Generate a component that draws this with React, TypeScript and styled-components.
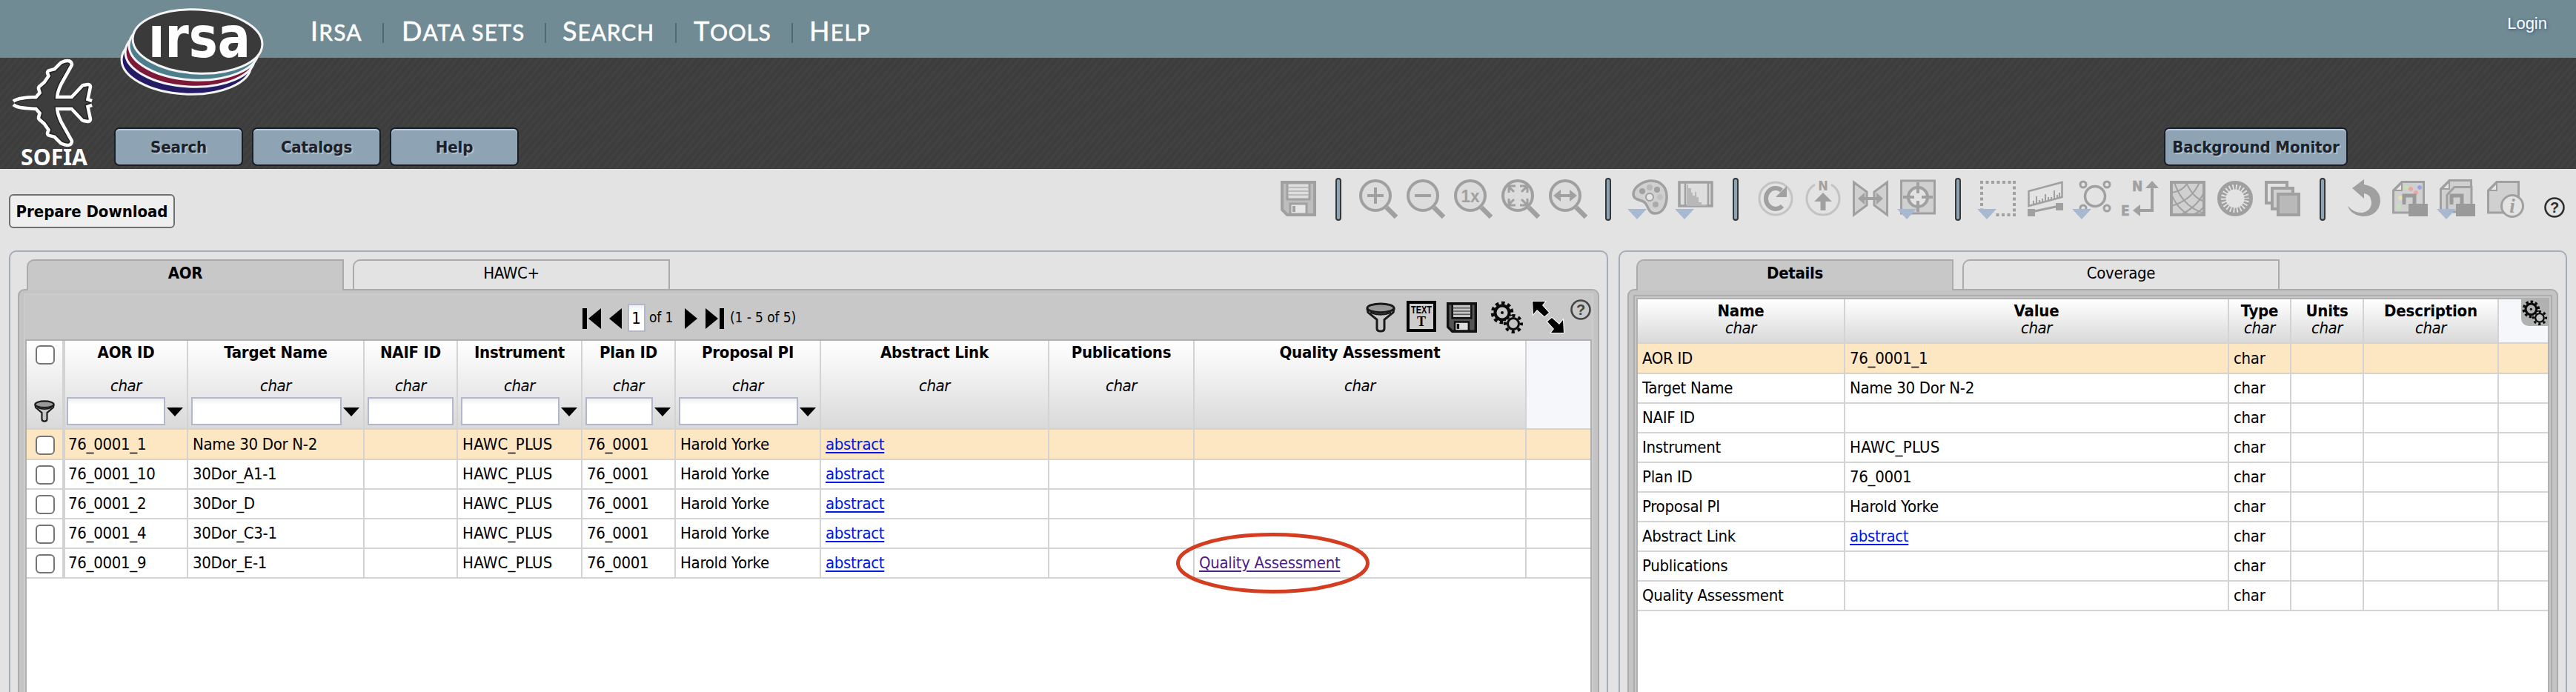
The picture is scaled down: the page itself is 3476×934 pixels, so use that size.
import React from "react";
import styled, { createGlobalStyle, css } from "styled-components";

const uiFont = `"DejaVu Sans Condensed", "DejaVu Sans", sans-serif`;

const GlobalStyle = createGlobalStyle`
  * { box-sizing: border-box; }
  body { margin: 0; background: #e3e3e3; font-family: ${uiFont}; font-stretch: condensed; font-size: 22px; color: #000; }
  button, input { font: inherit; }
  svg { display: block; flex: none; overflow: visible; }
`;

const Page = styled.div`
  position: relative;
  display: flex;
  flex-direction: column;
  width: 3476px;
  height: 934px;
  overflow: hidden;
  background: #e3e3e3;
`;

const SiteBar = styled.header`
  display: flex;
  align-items: flex-start;
  justify-content: space-between;
  flex: none;
  height: 78px;
  padding: 0 39px 0 419px;
  background: #718b94;
`;

const SiteNav = styled.nav`
  display: flex;
`;

const NavItem = styled.a<{ $width: number; $gap: number }>`
  display: flex;
  align-items: baseline;
  width: ${(p) => p.$width}px;
  margin-right: ${(p) => p.$gap}px;
  margin-top: 18px;
  height: 44px;
  line-height: 46px;
  white-space: nowrap;
  font-family: Lato, sans-serif;
  font-stretch: normal;
  font-size: 30px;
  color: #fff;
  text-transform: uppercase;
  -webkit-text-stroke: 0.5px #fff;
`;

const NavLabel = styled.span<{ $spacing: number }>`
  display: block;
  letter-spacing: ${(p) => p.$spacing}px;
  &::first-letter { font-size: 36px; }
`;

const NavDivider = styled.span<{ $after: number }>`
  width: 2px;
  height: 27px;
  margin: 31px ${(p) => p.$after}px 0 -2px;
  background: #4c6974;
`;

const Login = styled.a`
  margin-top: 19px;
  font-family: "Liberation Sans", sans-serif;
  font-stretch: normal;
  font-size: 22px;
  line-height: 26px;
  color: #fff;
  text-shadow: 1px 1px 4px #2d4f80;
`;

const AppBar = styled.div`
  display: flex;
  align-items: flex-end;
  flex: none;
  height: 150px;
  padding: 0 308px 4px 154px;
  gap: 12px;
  background: repeating-linear-gradient(130deg, #3d3d3d 0 3px, #424242 4px 5px, #3d3d3d 7px);
`;

const AppButton = styled.button<{ $width: number }>`
  width: ${(p) => p.$width}px;
  height: 52px;
  padding: 0;
  border: 2px solid #191d25;
  border-radius: 7px;
  background: #8ea4b5;
  box-shadow: inset 0 2px 0 #bccbdb;
  font-size: 22px;
  font-weight: bold;
  letter-spacing: -0.1px;
  color: #1b222b;
  text-shadow: 2px 2px 1px #b4c0cb;
`;

const BarSpacer = styled.div`
  flex: 1;
`;

const Brand = styled.div`
  position: absolute;
  left: 0;
  top: 0;
`;

const ActionRow = styled.div`
  display: flex;
  justify-content: space-between;
  flex: none;
  height: 110px;
  padding: 0 14px 0 12px;
`;

const PrepareButton = styled.button`
  width: 224px;
  height: 46px;
  margin-top: 34px;
  padding: 0;
  border: 2px solid #707070;
  border-radius: 6px;
  background: #efefef;
  font-weight: bold;
  white-space: nowrap;
  letter-spacing: -0.05px;
`;

const ImageTools = styled.div`
  display: flex;
  padding-top: 12px;
`;

const ToolDivider = styled.span`
  width: 8px;
  height: 58px;
  margin: 0 22px 0 14px;
  border: 2px solid #33383c;
  border-radius: 4px;
  background: #8ea4b5;
`;

const HelpSlot = styled.span`
  margin: 25px 0 0 16px;
`;

const Workspace = styled.main`
  display: flex;
  flex: 1;
  gap: 14px;
  padding: 0 12px;
  height: 596px;
`;

const Group = styled.section<{ $width: number }>`
  display: flex;
  flex-direction: column;
  width: ${(p) => p.$width}px;
  height: 620px;
  padding: 10px 10px 0;
  border: 2px solid #a5acb9;
  border-radius: 10px;
`;

const TabStrip = styled.div`
  display: flex;
  flex: none;
  gap: 12px;
  height: 40px;
  padding-left: 12px;
`;

const Tab = styled.div<{ $active?: boolean }>`
  position: relative;
  width: 428px;
  height: 40px;
  border: 2px solid #ababab;
  border-bottom: 0;
  border-radius: 10px 0 0 0;
  text-align: center;
  line-height: 33px;
  letter-spacing: -0.3px;
  ${(p) =>
    p.$active &&
    css`
      z-index: 1;
      height: 42px;
      background: #c8c8c8;
      font-weight: bold;
    `}
`;

const TabBody = styled.div`
  display: flex;
  flex: 1;
  flex-direction: column;
  padding: 4px 6px 0;
  border: 2px solid #ababab;
  border-radius: 9px 9px 0 0;
  background: #c4c4c4;
`;

const TableShell = styled.div<{ $lined?: boolean }>`
  display: flex;
  flex: 1;
  flex-direction: column;
  border: 2px solid ${(p) => (p.$lined ? "#adadad" : "#cccccc")};
  padding: ${(p) => (p.$lined ? "2px" : "0")};
  margin-top: ${(p) => (p.$lined ? "2px" : "0")};
  background: #c8c8c8;
`;

const TableBar = styled.div`
  display: flex;
  flex: none;
  justify-content: space-between;
  height: 60px;
  padding-left: 752px;
`;

const Pager = styled.div`
  display: flex;
  padding-top: 10px;
`;

const PageInput = styled.span`
  width: 24px;
  height: 38px;
  margin: 2px 5px 0 8px;
  border: 2px solid #b3b7cb;
  background: linear-gradient(#edf0f0, #fff 8px);
  text-align: center;
  line-height: 36px;
  text-indent: -1px;
`;

const PagerText = styled.span<{ $width: number }>`
  width: ${(p) => p.$width}px;
  margin-top: 3px;
  line-height: 34px;
  white-space: nowrap;
  font-size: 19px;
  letter-spacing: -0.1px;
`;

const Pointer = styled.span<{ $gap: number }>`
  margin: 8px ${(p) => p.$gap}px 0 0;
`;

const TableTools = styled.div`
  display: flex;
`;

const ToolSlot = styled.span<{ $gap: number; $top: number }>`
  margin: ${(p) => p.$top}px ${(p) => p.$gap}px 0 0;
`;

const TableFrame = styled.div`
  position: relative;
  flex: 1;
  border: 2px solid #b0b0b0;
  background: #fff;
`;

const HeaderRow = styled.div<{ $cols: string; $height: number }>`
  display: grid;
  grid-template-columns: ${(p) => p.$cols};
  height: ${(p) => p.$height}px;
`;

const HeaderCell = styled.div<{ $blank?: boolean; $edge?: number }>`
  display: flex;
  flex-direction: column;
  align-items: center;
  min-width: 0;
  border-right: ${(p) => p.$edge ?? 2}px solid #d3d3d3;
  border-bottom: 2px solid #d3d3d3;
  background: ${(p) => (p.$blank ? "#f5f7fa" : "linear-gradient(#fff, #f0f0f0 40%, #d9d9d9)")};
`;

const ColumnTitle = styled.div`
  flex: none;
  height: 26px;
  line-height: 32px;
  font-weight: bold;
  white-space: nowrap;
  letter-spacing: -0.2px;
`;

const ColumnType = styled.div<{ $spread?: boolean }>`
  margin-top: ${(p) => (p.$spread ? 22 : 0)}px;
  line-height: 25px;
  font-style: italic;
  letter-spacing: -0.4px;
`;

const FilterRow = styled.div<{ $first?: boolean }>`
  display: flex;
  gap: 2px;
  width: 100%;
  height: 38px;
  margin-top: 3px;
  padding: 0 4px 0 ${(p) => (p.$first ? 2 : 4)}px;
`;

const FilterBox = styled.input`
  flex: 1;
  min-width: 0;
  height: 38px;
  padding: 0;
  border: 2px solid #b3b7cb;
  border-radius: 0;
  outline: none;
  background: linear-gradient(#edf0f0, #fff 8px);
`;

const FilterArrow = styled.span`
  width: 23px;
  padding-top: 14px;
`;

const DataRow = styled.div<{ $cols: string; $selected?: boolean }>`
  display: grid;
  grid-template-columns: ${(p) => p.$cols};
  height: 40px;
  background: ${(p) => (p.$selected ? "#fde7c3" : "#fff")};
`;

const Cell = styled.div<{ $inset?: number; $edge?: number }>`
  min-width: 0;
  padding: 1px 0 0 ${(p) => p.$inset ?? 6}px;
  border-right: ${(p) => p.$edge ?? 2}px solid #d3d3d3;
  border-bottom: 2px solid #d3d3d3;
  line-height: 38px;
  white-space: nowrap;
  letter-spacing: -0.3px;
`;

const Wide = styled.span`
  letter-spacing: 0.25px;
`;

const Link = styled.a<{ $visited?: boolean }>`
  color: ${(p) => (p.$visited ? "#4b2187" : "#0018e8")};
  text-decoration: underline;
  text-decoration-thickness: 2px;
  text-underline-offset: 3px;
`;

const Checkbox = styled.span`
  display: block;
  width: 26px;
  height: 26px;
  border: 2px solid #767676;
  border-radius: 6px;
  background: #fff;
`;

const CheckCell = styled.div`
  padding: 8px 0 0 12px;
  border-right: 4px solid #d3d3d3;
  border-bottom: 2px solid #d3d3d3;
`;

const CheckHeader = styled(CheckCell)`
  display: flex;
  flex-direction: column;
  justify-content: space-between;
  padding: 6px 0 8px 10px;
  background: linear-gradient(#fff, #f0f0f0 40%, #d9d9d9);
  ${Checkbox} { margin-left: 2px; }
`;

const OptionsButton = styled.button`
  position: absolute;
  top: 0;
  right: 0;
  width: 36px;
  height: 36px;
  padding: 1px;
  border: 0;
  border-radius: 0 0 0 10px;
  background: #b1b1b1;
`;

const Highlight = styled.svg`
  position: absolute;
  left: 1585px;
  top: 717px;
`;

const G = "#a0a0a0";
const L = "#d0d0d0";

const Icon = ({ children, menu }: { children: React.ReactNode; menu?: boolean }) => (
  <svg width="64" height="58" viewBox="0 0 64 58" fill="none" stroke={G} strokeWidth="4">
    {children}
    {menu && <path d="M0 42H26L13 56Z" fill="#a8b9cf" stroke="none" />}
  </svg>
);

const Lens = ({ children }: { children: React.ReactNode }) => (
  <Icon>
    <circle cx="24" cy="24" r="20" fill="#dcdcdc" />
    <path d="M39 40L52 53" strokeWidth="6.5" />
    {children}
  </Icon>
);

const Disk = ({ dark }: { dark?: boolean }) => {
  const s = dark ? "#111" : G;
  return (
    <g stroke={s} fill="none">
      <path d="M6 6H50V50H13L6 43Z" fill={dark ? "#555" : "#bdbdbd"} strokeWidth="4" />
      <path d="M13 7H43V29H13Z" fill={dark ? "#c4c4c4" : "#dedede"} strokeWidth="3" />
      <path d="M14 13H42M14 18H42M14 23H42" strokeWidth="1.8" stroke={dark ? "#555" : "#bbb"} />
      <path d="M17 35H39V49H17Z" fill={dark ? "#ddd" : "#e6e6e6"} strokeWidth="3" />
      <path d="M22 38V46" strokeWidth="4" />
    </g>
  );
};

const Palette = () => (
  <Icon menu>
    <path d="M30 4C47 3 54 15 53 28C52 40 46 48 38 48C28 48 29 40 24 34C20 29 8 31 8 22C8 13 20 5 30 4Z" fill={L} strokeWidth="3.5" />
    <circle cx="20" cy="18" r="4" fill={G} stroke="none" />
    <circle cx="30" cy="13" r="4" fill="#b8b8b8" stroke="none" />
    <circle cx="40" cy="16" r="4" fill={G} stroke="none" />
    <circle cx="44" cy="26" r="4" fill="#c2c2c2" stroke="none" />
    <circle cx="38" cy="36" r="4" fill="#aaa" stroke="none" />
    <circle cx="30" cy="26" r="5" fill="#e6e6e6" strokeWidth="2" />
  </Icon>
);

const Histogram = () => (
  <Icon menu>
    <path d="M6 6H50V38H6Z" fill="#dedede" strokeWidth="3.5" />
    <path d="M14 6V38M45 6V38" strokeWidth="2.5" />
    <path d="M16 38V9H18V14H22V20H24V24H27V19H29V26H32V33H36V36H42V38Z" fill="#b8b8b8" stroke="none" />
  </Icon>
);

const RotateIcon = () => (
  <Icon>
    <circle cx="28" cy="28" r="22" stroke="#c3c3c3" strokeWidth="3" />
    <path d="M37 38A13 14 0 1 1 36 17" strokeWidth="6" />
    <path d="M43 11V26H28Z" fill={G} stroke="none" />
  </Icon>
);

const NorthIcon = () => (
  <Icon>
    <path d="M17 9A22 22 0 1 0 39 9" stroke="#c3c3c3" strokeWidth="3" />
    <text x="28" y="17" textAnchor="middle" fontFamily="DejaVu Sans" fontWeight="bold" fontSize="18" fill={G} stroke="none">N</text>
    <path d="M28 20L40 32H31.500V44H24.500V32H16Z" fill={G} stroke="none" />
  </Icon>
);

const FlipIcon = () => (
  <Icon>
    <path d="M5.500 6L23 19V37L5.500 50ZM50.500 6L33 19V37L50.500 50Z" fill={L} strokeWidth="3" />
    <path d="M17 28H39" />
    <path d="M11 28L20 20V36ZM45 28L36 20V36Z" fill={G} stroke="none" />
  </Icon>
);

const RecenterIcon = () => (
  <Icon menu>
    <path d="M5.500 4H50.500V48H5.500Z" fill={L} strokeWidth="3" />
    <circle cx="28" cy="26" r="13" fill="#e3e3e3" />
    <path d="M28 6V21M28 31V46M8 26H23M33 26H48" />
  </Icon>
);

const SelectIcon = () => (
  <Icon menu>
    <path d="M4 6H52M50 4V52M52 50H22M6 4V42" strokeDasharray="4 3.500" />
  </Icon>
);

const RulerIcon = () => (
  <Icon>
    <path d="M5.500 18L50.500 6V26L5.500 38Z" strokeWidth="2.500" />
    <path d="M12 36V31M16 35V25M20 34V30M24 33V28M28 32V22M32 31V26M36 30V26M40 28V17M44 27V23M47 26V20" strokeWidth="2" />
    <path d="M9 46L47 38" strokeWidth="3" />
    <path d="M4 42H14V52H4ZM42 34H52V44H42Z" fill={G} stroke="none" />
  </Icon>
);

const MarkerIcon = () => (
  <Icon menu>
    <circle cx="31" cy="25" r="13.500" strokeWidth="3.500" />
    {[[15, 9], [47, 9], [47, 41], [15, 41]].map(([x, y]) => (
      <circle key={`${x}-${y}`} cx={x} cy={y} r="4" strokeWidth="3" />
    ))}
  </Icon>
);

const CompassIcon = () => (
  <Icon>
    <path d="M44 12V44H26" />
    <path d="M44 4L53 14H35ZM18 44L28 36V52Z" fill={G} stroke="none" />
    <g fontFamily="DejaVu Sans" fontWeight="bold" fontSize="19" fill={G} stroke={G} strokeWidth="0.500">
      <text x="17" y="18">N</text>
      <text x="2" y="51">E</text>
    </g>
  </Icon>
);

const GridIcon = () => (
  <Icon>
    <path d="M6 6H50V50H6Z" fill={L} />
    <path d="M6 20Q22 18 28 6M6 38Q34 30 44 6M18 50Q40 40 50 20M34 50Q46 46 50 38M10 6Q20 38 50 48M26 6Q34 26 50 32M6 22Q14 42 30 50" strokeWidth="2" />
  </Icon>
);

const SunRingIcon = () => (
  <Icon>
    <circle cx="28" cy="28" r="21.500" strokeWidth="5" />
    <circle cx="28" cy="28" r="16.500" strokeWidth="8" strokeDasharray="2.800 1.912" />
  </Icon>
);

const LayersIcon = () => (
  <Icon>
    <path d="M6 6H34V34H6Z" fill="#e3e3e3" />
    <path d="M14 14H42V42H14Z" fill={L} />
    <path d="M22 22H50V50H22Z" fill="#b9b9b9" />
  </Icon>
);

const UndoIcon = () => (
  <Icon>
    <path d="M14 14L30 2V9Q52 13 52 32Q49 52 28 52Q12 50 8 38Q17 48 28 47Q40 44 40 33Q39 22 30 21V28Z" fill={G} stroke="none" />
  </Icon>
);

const Doc = ({ x = 4, y = 4 }: { x?: number; y?: number }) => (
  <g transform={`translate(${x} ${y})`}>
    <path d="M1.500 43V13L13 1.500H42.500V43Z" fill={L} strokeWidth="3" />
    <path d="M3 13L13 3V13Z" fill="#e8e8e8" strokeWidth="2" />
  </g>
);

const Padlock = () => (
  <g>
    <path d="M20 36V24H34V36" stroke="#9a9a9a" strokeWidth="5" />
    <path d="M26 35H52V52H26Z" fill="#9a9a9a" stroke="none" />
  </g>
);

const sparks: [string, number, number][] = [
  ["#bfe5b3", 23, 13],
  ["#eea5a0", 29, 15],
  ["#a0a0ea", 41, 13],
  ["#eea5a0", 36, 20],
  ["#e8e4b0", 15, 27],
  ["#bfe5b3", 13, 39],
];

const LockDocIcon = () => (
  <Icon>
    <Doc />
    {sparks.map(([c, x, y]) => (
      <path key={`${x}-${y}`} d={`M${x - 3} ${y}H${x + 3}M${x} ${y - 3}V${y + 3}`} stroke={c} strokeWidth="3" />
    ))}
    <Padlock />
  </Icon>
);

const LockStackIcon = () => (
  <Icon menu>
    <Doc y={2} />
    <path d="M14 46V23L24 12.500H47V46Z" fill={L} strokeWidth="3" />
    <Padlock />
  </Icon>
);

const InfoDocIcon = () => (
  <Icon>
    <Doc />
    <circle cx="38" cy="38" r="14.500" fill="#e3e3e3" strokeWidth="3" />
    <text x="38" y="47" textAnchor="middle" fontFamily="Liberation Serif" fontStyle="italic" fontWeight="bold" fontSize="27" fill={G} stroke="none">i</text>
  </Icon>
);

const HelpIcon = ({ color }: { color: string }) => (
  <svg width="30" height="30" viewBox="0 0 30 30">
    <circle cx="15" cy="15" r="12.500" fill="none" stroke={color} strokeWidth="2.600" />
    <text x="15" y="22" textAnchor="middle" fontFamily="Liberation Sans" fontWeight="bold" fontSize="20" fill={color}>?</text>
  </svg>
);

const Funnel = ({ width, height }: { width: number; height: number }) => (
  <svg width={width} height={height} viewBox="0 0 40 42" preserveAspectRatio="none" stroke="#1a1a1a" strokeWidth="3" strokeLinejoin="round">
    <path d="M2 9L3 14L15 24V36Q15 40 20 40Q25 40 25 36V24L37 14L38 9Z" fill="#c8c8c8" />
    <ellipse cx="20" cy="8" rx="18" ry="6" fill="#999" />
    <path d="M6 14Q20 20 34 14" fill="none" strokeWidth="2.500" />
  </svg>
);

const TextViewIcon = () => (
  <svg width="40" height="42" viewBox="0 0 40 42">
    <path d="M2 2H38V40H2Z" fill="#cdcdcd" stroke="#000" strokeWidth="4" />
    <text x="20" y="17" textAnchor="middle" textLength="28" lengthAdjust="spacingAndGlyphs" fontFamily="Liberation Sans" fontWeight="bold" fontSize="14">TEXT</text>
    <text x="20" y="34" textAnchor="middle" fontFamily="Liberation Serif" fontWeight="bold" fontSize="18">T</text>
  </svg>
);

const SaveIcon = () => (
  <svg width="41" height="41" viewBox="4 4 48 48">
    <Disk dark />
  </svg>
);

const Gears = ({ size }: { size: number }) => (
  <svg width={size} height={size} viewBox="0 0 44 44" fill="none" stroke="#0a0a0a">
    <circle cx="16" cy="16" r="13" strokeWidth="4.500" strokeDasharray="4.500 3.668" transform="rotate(12 16 16)" />
    <circle cx="16" cy="16" r="9.500" strokeWidth="4" />
    <circle cx="16" cy="16" r="2" fill="#0a0a0a" stroke="none" />
    <circle cx="31" cy="31" r="11" fill="#c4c4c4" stroke="none" />
    <circle cx="31" cy="31" r="11" strokeWidth="4" strokeDasharray="4.200 4.439" strokeDashoffset="2" />
    <circle cx="31" cy="31" r="7.500" strokeWidth="3" />
  </svg>
);

const ExpandIcon = () => (
  <svg width="44" height="44" viewBox="0 0 44 44" stroke="#fff" strokeWidth="2" paintOrder="stroke">
    <path d="M1 1H18L14 6L23 16L17 21L7 12L2 18ZM43 43H26L30 38L21 28L27 23L37 32L42 26Z" fill="#000" />
  </svg>
);

const columns: { title: string; filter?: "menu" | "plain" }[] = [
  { title: "AOR ID", filter: "menu" },
  { title: "Target Name", filter: "menu" },
  { title: "NAIF ID", filter: "plain" },
  { title: "Instrument", filter: "menu" },
  { title: "Plan ID", filter: "menu" },
  { title: "Proposal PI", filter: "menu" },
  { title: "Abstract Link" },
  { title: "Publications" },
  { title: "Quality Assessment" },
];

const observations = [
  { id: "76_0001_1", target: "Name 30 Dor N-2" },
  { id: "76_0001_10", target: "30Dor_A1-1" },
  { id: "76_0001_2", target: "30Dor_D" },
  { id: "76_0001_4", target: "30Dor_C3-1" },
  { id: "76_0001_9", target: "30Dor_E-1", assessed: true },
];

const details: { name: string; value?: React.ReactNode }[] = [
  { name: "AOR ID", value: "76_0001_1" },
  { name: "Target Name", value: "Name 30 Dor N-2" },
  { name: "NAIF ID" },
  { name: "Instrument", value: <Wide>HAWC_PLUS</Wide> },
  { name: "Plan ID", value: "76_0001" },
  { name: "Proposal PI", value: "Harold Yorke" },
  { name: "Abstract Link", value: <Link>abstract</Link> },
  { name: "Publications" },
  { name: "Quality Assessment" },
];

const mainCols = "52px 166px 238px 126px 168px 126px 196px 308px 196px 448px 86px";
const detailCols = "280px 518px 84px 98px 182px 66px";

const menuItems = [
  { label: "Irsa", width: 72, gap: 27, after: 24, spacing: 1.2 },
  { label: "Data sets", width: 168, gap: 27, after: 22, spacing: 1.2 },
  { label: "Search", width: 127, gap: 27, after: 23, spacing: 0.9 },
  { label: "Tools", width: 107, gap: 27, after: 22, spacing: 0.7 },
  { label: "Help", width: 83, gap: 0, after: 0, spacing: 1.2 },
];

const planeHalf = "M20 139C24 135.500 34 134.500 50 134L57 126L55 119L62 113L69 103L67 98L75 96L84 87Q93 83 94 87L80 112Q74 124 74 134H98L113 118L119 117L115 136L123 139";

const ovals: [string, number, number][] = [
  ["#241a66", -15, 28],
  ["#7c1838", -10, 18],
  ["#4d7e8b", -5, 9],
  ["#3a3a3a", 0, 0],
];

const BrandMarks = () => (
  <svg width="370" height="228" viewBox="0 0 370 228">
    <g strokeLinejoin="round">
      <g fill="#fff" stroke="#fff" strokeWidth="10.500">
        <path d={planeHalf} />
        <path d={planeHalf} transform="matrix(1 0 0 -1 0 278)" />
      </g>
      <g fill="#3d3d3d" stroke="#222" strokeWidth="1.500">
        <path d={planeHalf} />
        <path d={planeHalf} transform="matrix(1 0 0 -1 0 278)" />
        <path d="M26 139H112" strokeWidth="7" stroke="#3d3d3d" />
      </g>
    </g>
    <text x="28" y="222.500" textLength="90" lengthAdjust="spacingAndGlyphs" fontFamily="Noto Sans" fontWeight="bold" fontSize="30" fill="#fff">SOFIA</text>
    <g stroke="#f4f4f4" strokeWidth="3">
      {ovals.map(([fill, dx, dy]) => (
        <ellipse key={fill} cx={266.5 + dx} cy={56 + dy} rx="87.500" ry="43" fill={fill} transform={`rotate(3 ${266.5 + dx} ${56 + dy})`} />
      ))}
    </g>
    <text x="200" y="77" textLength="138" lengthAdjust="spacingAndGlyphs" fontFamily="DejaVu Sans" fontWeight="bold" fontSize="76" fill="#fff">ırsa</text>
  </svg>
);

const App = () => (
  <>
    <GlobalStyle />
    <Page>
      <SiteBar>
        <SiteNav>
          {menuItems.map((m, i) => (
            <React.Fragment key={m.label}>
              <NavItem $width={m.width} $gap={m.gap}>
                <NavLabel $spacing={m.spacing}>{m.label}</NavLabel>
              </NavItem>
              {i < menuItems.length - 1 && <NavDivider $after={m.after} />}
            </React.Fragment>
          ))}
        </SiteNav>
        <Login>Login</Login>
      </SiteBar>
      <AppBar>
        <AppButton $width={174}>Search</AppButton>
        <AppButton $width={174}>Catalogs</AppButton>
        <AppButton $width={174}>Help</AppButton>
        <BarSpacer />
        <AppButton $width={248}>Background Monitor</AppButton>
      </AppBar>
      <Brand>
        <BrandMarks />
      </Brand>
      <ActionRow>
        <PrepareButton>Prepare Download</PrepareButton>
        <ImageTools>
          <Icon><Disk /></Icon>
          <ToolDivider />
          <Lens><path d="M24 13V35M13 24H35" /></Lens>
          <Lens><path d="M13 24H35" /></Lens>
          <Lens>
            <text x="24" y="33" textAnchor="middle" fontFamily="Liberation Sans" fontWeight="bold" fontSize="23" textLength="25" lengthAdjust="spacingAndGlyphs" fill={G} stroke="none">1x</text>
          </Lens>
          <Lens><path d="M19 19L12 12M12 20V11H21M29 19L36 12M27 11H37V20M19 29L12 36M12 28V37H21M29 29L36 36M27 37H37V28" strokeWidth="3" /></Lens>
          <Lens>
            <path d="M14 24H34" />
            <path d="M8 24L18 16V32ZM40 24L30 16V32Z" fill={G} stroke="none" />
          </Lens>
          <ToolDivider />
          <Palette />
          <Histogram />
          <ToolDivider />
          <RotateIcon />
          <NorthIcon />
          <FlipIcon />
          <RecenterIcon />
          <ToolDivider />
          <SelectIcon />
          <RulerIcon />
          <MarkerIcon />
          <CompassIcon />
          <GridIcon />
          <SunRingIcon />
          <LayersIcon />
          <ToolDivider />
          <UndoIcon />
          <LockDocIcon />
          <LockStackIcon />
          <InfoDocIcon />
          <HelpSlot><HelpIcon color="#2e2e2e" /></HelpSlot>
        </ImageTools>
      </ActionRow>
      <Workspace>
        <Group $width={2158}>
          <TabStrip>
            <Tab $active>AOR</Tab>
            <Tab>HAWC+</Tab>
          </TabStrip>
          <TabBody>
            <TableShell>
              <TableBar>
                <Pager>
                  <Pointer $gap={10}>
                    <svg width="26" height="28"><path d="M0 0H6V28H0ZM25 0V28L8 14Z" /></svg>
                  </Pointer>
                  <Pointer $gap={0}>
                    <svg width="17" height="28"><path d="M17 0V28L0 14Z" /></svg>
                  </Pointer>
                  <PageInput>1</PageInput>
                  <PagerText $width={48}>of 1</PagerText>
                  <Pointer $gap={11}>
                    <svg width="17" height="28"><path d="M0 0V28L17 14Z" /></svg>
                  </Pointer>
                  <Pointer $gap={8}>
                    <svg width="25" height="28"><path d="M0 0V28L17 14ZM19 0H25V28H19Z" /></svg>
                  </Pointer>
                  <PagerText $width={95}>(1 - 5 of 5)</PagerText>
                </Pager>
                <TableTools>
                  <ToolSlot $gap={15} $top={10}><Funnel width={40} height={41} /></ToolSlot>
                  <ToolSlot $gap={14} $top={8}><TextViewIcon /></ToolSlot>
                  <ToolSlot $gap={18} $top={10}><SaveIcon /></ToolSlot>
                  <ToolSlot $gap={12} $top={8}><Gears size={44} /></ToolSlot>
                  <ToolSlot $gap={7} $top={8}><ExpandIcon /></ToolSlot>
                  <ToolSlot $gap={0} $top={5}><HelpIcon color="#444" /></ToolSlot>
                </TableTools>
              </TableBar>
              <TableFrame>
                <HeaderRow $cols={mainCols} $height={120}>
                  <CheckHeader>
                    <Checkbox />
                    <Funnel width={28} height={30} />
                  </CheckHeader>
                  {columns.map((c, i) => (
                    <HeaderCell key={c.title}>
                      <ColumnTitle>{c.title}</ColumnTitle>
                      <ColumnType $spread>char</ColumnType>
                      {c.filter && (
                        <FilterRow $first={i === 0}>
                          <FilterBox />
                          {c.filter === "menu" && (
                            <FilterArrow>
                              <svg width="22" height="13"><path d="M0 0H22L11 12Z" /></svg>
                            </FilterArrow>
                          )}
                        </FilterRow>
                      )}
                    </HeaderCell>
                  ))}
                  <HeaderCell $blank $edge={0} />
                </HeaderRow>
                {observations.map((o, i) => (
                  <DataRow key={o.id} $cols={mainCols} $selected={i === 0}>
                    <CheckCell><Checkbox /></CheckCell>
                    <Cell $inset={4}>{o.id}</Cell>
                    <Cell>{o.target}</Cell>
                    <Cell />
                    <Cell><Wide>HAWC_PLUS</Wide></Cell>
                    <Cell>76_0001</Cell>
                    <Cell>Harold Yorke</Cell>
                    <Cell><Link>abstract</Link></Cell>
                    <Cell />
                    <Cell>{o.assessed && <Link $visited>Quality Assessment</Link>}</Cell>
                    <Cell $edge={0} />
                  </DataRow>
                ))}
              </TableFrame>
            </TableShell>
          </TabBody>
        </Group>
        <Group $width={1280}>
          <TabStrip>
            <Tab $active>Details</Tab>
            <Tab>Coverage</Tab>
          </TabStrip>
          <TabBody>
            <TableShell $lined>
              <TableFrame>
                <HeaderRow $cols={detailCols} $height={60}>
                  {["Name", "Value", "Type", "Units", "Description"].map((t) => (
                    <HeaderCell key={t}>
                      <ColumnTitle>{t}</ColumnTitle>
                      <ColumnType>char</ColumnType>
                    </HeaderCell>
                  ))}
                  <HeaderCell $blank $edge={0} />
                </HeaderRow>
                {details.map((d, i) => (
                  <DataRow key={d.name} $cols={detailCols} $selected={i === 0}>
                    <Cell>{d.name}</Cell>
                    <Cell>{d.value}</Cell>
                    <Cell>char</Cell>
                    <Cell />
                    <Cell />
                    <Cell $edge={0} />
                  </DataRow>
                ))}
                <OptionsButton><Gears size={34} /></OptionsButton>
              </TableFrame>
            </TableShell>
          </TabBody>
        </Group>
      </Workspace>
      <Highlight width="266" height="88" viewBox="0 0 266 88">
        <ellipse cx="132.500" cy="43" rx="128" ry="38.500" fill="none" stroke="#d43d20" strokeWidth="5" />
      </Highlight>
    </Page>
  </>
);

export default App;
